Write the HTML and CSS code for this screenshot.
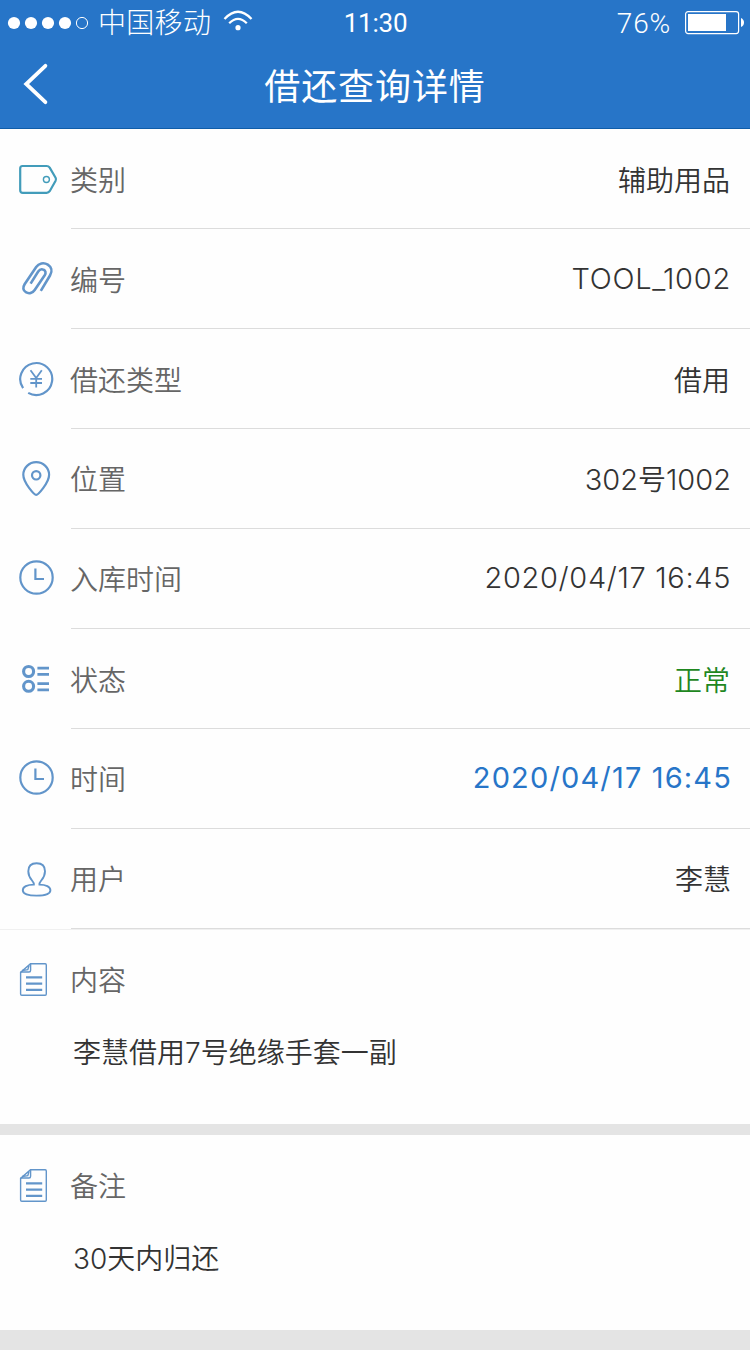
FILE: index.html
```html
<!DOCTYPE html>
<html lang="zh-CN">
<head>
<meta charset="utf-8">
<title>借还查询详情</title>
<link rel="stylesheet" href="styles.css">
</head>
<body>
<svg class="defs" width="0" height="0">
  <symbol id="clock" viewBox="0 0 40 40"><circle cx="18.5" cy="18.5" r="16.2"/><path d="M17.4 9.5V20H26"/></symbol>
  <symbol id="doc" viewBox="0 0 40 40"><g stroke-width="1.4"><path d="M12.5 4.8H27.2Q28.3 4.8 28.3 6V35Q28.3 36.2 27.2 36.2H3.8Q2.6 36.2 2.6 35V13.4Z"/><path d="M12.6 4.8V11.2Q12.6 13 11 13H2.6M4 11.5L9.8 10.6L11 6.5"/></g><path stroke-width="2.2" d="M8 18.4H24.2M8 24.6H24.2M8 30.8H24.2"/></symbol>
</svg>
<header class="header">
  <div class="status">
    <div class="carrier">
      <svg class="dots" width="82" height="14" viewBox="0 0 82 14"><g fill="#fff"><circle cx="7" cy="7" r="6.1"/><circle cx="24" cy="7" r="6.1"/><circle cx="41" cy="7" r="6.1"/><circle cx="58" cy="7" r="6.1"/></g><circle cx="75" cy="7" r="5.6" fill="none" stroke="#fff"/></svg>
      <span class="carrier-name">中国移动</span>
      <svg class="wifi" width="30" height="22" viewBox="0 0 30 22"><g fill="none" stroke="#fff" stroke-width="2.3"><path d="M1.5 9Q15 -5.5 28.5 9"/><path d="M6.2 13.2Q15 4.6 23.8 13.2"/></g><circle cx="15" cy="17.7" r="2.6" fill="#fff"/></svg>
    </div>
    <div class="time">11:30</div>
    <div class="power">
      <span class="percent">76%</span>
      <svg width="60" height="24" viewBox="0 0 60 24"><rect x=".6" y=".6" width="53" height="22" rx="2.5" fill="none" stroke="#fff" stroke-width="1.2"/><rect x="3" y="3" width="38" height="17" fill="#fff"/><path d="M56 7Q59 8.5 59 11.5T56 16Z" fill="#fff"/></svg>
    </div>
  </div>
  <nav class="nav">
    <svg class="back" width="40" height="44" viewBox="0 0 40 44"><path d="M27.4 3.8L8.2 22L27.4 40.2" fill="none" stroke="#fff" stroke-width="3.8" stroke-linecap="round"/></svg>
    <h1 class="title">借还查询详情</h1>
  </nav>
</header>
<main>
  <div class="row">
    <svg class="icon tag" viewBox="0 0 40 40"><path d="M4.5 7H28.6Q30.6 7 31.7 8.6L37.6 18.8Q38.4 20.3 37.6 21.8L31.7 32.2Q30.6 33.8 28.6 33.8H4.8Q2.2 33.8 2.2 31.2V9.4Q2.2 7 4.5 7Z"/><circle cx="28.4" cy="20.5" r="3" stroke-width="1.4"/></svg>
    <div class="cell"><span class="label">类别</span><span class="value">辅助用品</span></div>
  </div>
  <div class="row">
    <svg class="icon" viewBox="0 0 40 40"><path stroke-width="2.6" d="M22.8 31.8L32 16.5C34.8 12 33.2 7.8 29.8 5.6C25.5 3 20.8 4.3 18.2 8L6.6 25.2C4.5 28.5 5.1 31.8 7.8 33.2C11 35 14.7 34 16.7 31L26.7 16.3C28.3 13.7 27.4 11.5 25.7 10.8C23.8 9.8 21.6 10.5 20.2 12.5L12.6 24.6"/></svg>
    <div class="cell"><span class="label">编号</span><span class="value latin code">TOOL_1002</span></div>
  </div>
  <div class="row">
    <svg class="icon" viewBox="0 0 40 40"><path d="M5.1 29.2A16 16 0 1 1 10.2 33.9"/><path stroke-width="1.8" d="M12.5 11.3L18.2 19L23.8 11.3M18.2 19V28.5M12.3 19.8H24M12.3 24H24"/></svg>
    <div class="cell"><span class="label">借还类型</span><span class="value">借用</span></div>
  </div>
  <div class="row up">
    <svg class="icon" viewBox="0 0 40 40"><path d="M18.2 35.9C16.4 35.9 5.3 23.8 5.3 15.8A12.9 12.6 0 0 1 31.1 15.8C31.1 23.8 20 35.9 18.2 35.9Z"/><circle cx="18.2" cy="16.3" r="4.2"/></svg>
    <div class="cell"><span class="label">位置</span><span class="value latin place">302<span class="cjk">号</span>1002</span></div>
  </div>
  <div class="row up">
    <svg class="icon"><use href="#clock"/></svg>
    <div class="cell"><span class="label">入库时间</span><span class="value latin date">2020/04/17 16:45</span></div>
  </div>
  <div class="row">
    <svg class="icon" viewBox="0 0 40 40"><g stroke-width="3.1"><circle cx="10.6" cy="12.5" r="5"/><circle cx="10.6" cy="27.3" r="5"/></g><path stroke-width="2.8" d="M19.4 9.2H31M19.4 15.4H31M19.4 24.7H31M19.4 30.8H31"/></svg>
    <div class="cell"><span class="label">状态</span><span class="value ok">正常</span></div>
  </div>
  <div class="row up">
    <svg class="icon"><use href="#clock"/></svg>
    <div class="cell"><span class="label">时间</span><span class="value latin date link">2020/04/17 16:45</span></div>
  </div>
  <div class="row up">
    <svg class="icon" viewBox="0 0 40 40"><path stroke-width="1.9" d="M15.9 25.6C16.6 22 10.3 20.5 10.3 12.2C10.3 6.8 13.5 4.2 18.6 4.2S27 6.8 27 12.2C27 20.5 20.7 22 21.4 25.6C28 25.6 32.4 28 32.4 31.2C32.4 34.8 27 36.6 18.5 36.6S4.8 34.8 4.8 31.2C4.8 28 9 25.6 15.9 25.6Z"/></svg>
    <div class="cell"><span class="label">用户</span><span class="value name">李慧</span></div>
  </div>
  <section class="note first">
    <svg class="icon"><use href="#doc"/></svg>
    <h2 class="label">内容</h2>
    <p class="text">李慧借用<span class="num">7</span>号绝缘手套一副</p>
  </section>
  <section class="note">
    <svg class="icon"><use href="#doc"/></svg>
    <h2 class="label">备注</h2>
    <p class="text"><span class="num">30</span>天内归还</p>
  </section>
</main>
</body>
</html>
```
FILE: styles.css
```css
* { box-sizing: border-box; }
body {
  margin: 0;
  width: 750px;
  height: 1350px;
  overflow: hidden;
  background: #e4e4e4;
  color: #333;
  font: 350 28px/40px "Noto Sans CJK SC", sans-serif;
}
.defs { display: block; }
.header {
  height: 129px;
  background: #2775c8;
  border-bottom: 1px solid #0f5da9;
  color: #fff;
}
.status {
  display: grid;
  grid-template-columns: 1fr 100px 1fr;
  height: 44px;
  line-height: 44px;
}
.carrier { display: flex; align-items: center; padding-left: 7px; }
.carrier-name { margin: -4px 0 0 9px; font-weight: 300; letter-spacing: .3px; }
.dots { margin-top: -1px; }
.wifi { margin: -4px 0 0 12px; }
.time { text-align: center; font-family: Roboto, sans-serif; font-weight: 400; font-size: 26px; letter-spacing: -.2px; padding: 1px 0 0 1px; }
.power { display: flex; justify-content: flex-end; align-items: center; padding-right: 5px; }
.percent { font-family: Roboto, sans-serif; font-weight: 300; font-size: 28px; margin-right: 14px; padding-top: 2px; letter-spacing: .8px; }
.nav {
  display: grid;
  grid-template-columns: 100px 1fr 100px;
  align-items: start;
  height: 84px;
}
.back { margin: 18px 0 0 18px; }
.title { margin: 0; text-align: center; font-size: 36px; font-weight: 400; letter-spacing: .9px; line-height: 80px; }
.row { display: flex; height: 100px; padding-left: 18px; background: #fefefe; }
.icon {
  flex: none;
  width: 40px;
  height: 40px;
  margin-top: 30px;
  fill: none;
  stroke: #6295ca;
  stroke-width: 2.2;
}
.tag { stroke: #429cba; }
.cell {
  flex: 1;
  display: flex;
  justify-content: space-between;
  margin-left: 13px;
  padding: 30px 20px 0 0;
  border-bottom: 1px solid #dcdcdc;
}
.up .cell { padding: 29px 19px 0 0; }
.label { color: #666; margin: 0 0 0 -1px; font-size: 28px; font-weight: 350; }
.latin { font-family: Inter, sans-serif; font-weight: 300; font-size: 29px; }
.code { letter-spacing: .75px; margin-right: -1px; }
.place { letter-spacing: 0; }
.date { letter-spacing: .65px; }
.cjk { font-family: "Noto Sans CJK SC", sans-serif; font-size: 28px; font-weight: 350; }
.ok { color: #1f871f; }
.link { color: #2775c8; font-weight: 400; letter-spacing: 1.15px; margin-right: -1px; }
.note {
  display: grid;
  grid-template-columns: 52px 1fr;
  grid-template-rows: 82px 1fr;
  height: 195px;
  margin-bottom: 11px;
  padding-left: 18px;
  background: #fefefe;
}
.note .label { margin-left: 0; padding-top: 30px; }
.first { box-shadow: inset 0 1px #f0f0f0; }
.text { grid-column: 2; margin: 20px 0 0 3px; }
.num { font-family: Inter, sans-serif; font-weight: 300; }
```
